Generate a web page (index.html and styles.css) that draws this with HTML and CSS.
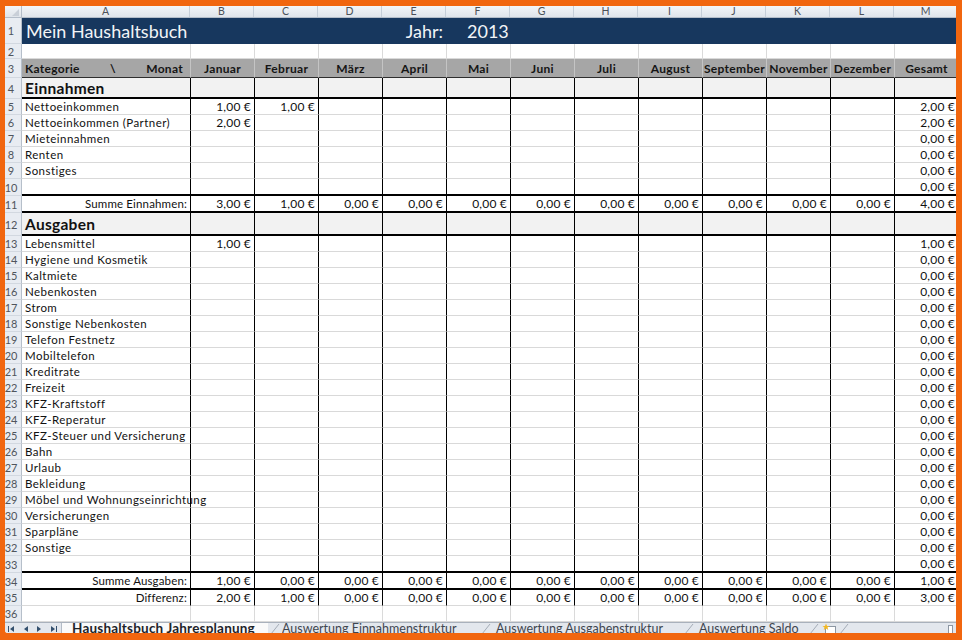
FILE: index.html
```html
<!DOCTYPE html>
<html lang="de">
<head>
<meta charset="utf-8">
<title>Mein Haushaltsbuch</title>
<link rel="stylesheet" href="styles.css">
</head>
<body>
<div class="sheet">
  <div class="cols">
    <span class="corner"><svg width="8" height="8" viewBox="0 0 8 8"><path d="M8 1 L8 8 L1 8 Z" fill="#c9cfd8"/></svg></span>
    <span>A</span><span>B</span><span>C</span><span>D</span><span>E</span><span>F</span><span>G</span><span>H</span><span>I</span><span>J</span><span>K</span><span>L</span><span>M</span>
  </div>

  <div class="row title"><span class="rh">1</span><span class="t1">Mein Haushaltsbuch</span><span class="jahr">Jahr:</span><span class="year">2013</span><span class="fill"></span></div>

  <div class="row plain r2"><span class="rh">2</span><span class="ca"></span><span></span><span></span><span></span><span></span><span></span><span></span><span></span><span></span><span></span><span></span><span></span><span></span></div>

  <div class="row hdr"><span class="rh">3</span><span class="ca kat"><em>Kategorie</em><em>\</em><em>Monat</em></span><span>Januar</span><span>Februar</span><span>März</span><span>April</span><span>Mai</span><span>Juni</span><span>Juli</span><span>August</span><span>September</span><span>November</span><span>Dezember</span><span>Gesamt</span></div>

  <div class="row sec"><span class="rh">4</span><span class="ca">Einnahmen</span><span></span><span></span><span></span><span></span><span></span><span></span><span></span><span></span><span></span><span></span><span></span><span></span></div>

  <div class="row"><span class="rh">5</span><span class="ca">Nettoeinkommen</span><span>1,00 €</span><span>1,00 €</span><span></span><span></span><span></span><span></span><span></span><span></span><span></span><span></span><span></span><span>2,00 €</span></div>
  <div class="row"><span class="rh">6</span><span class="ca">Nettoeinkommen (Partner)</span><span>2,00 €</span><span></span><span></span><span></span><span></span><span></span><span></span><span></span><span></span><span></span><span></span><span>2,00 €</span></div>
  <div class="row"><span class="rh">7</span><span class="ca">Mieteinnahmen</span><span></span><span></span><span></span><span></span><span></span><span></span><span></span><span></span><span></span><span></span><span></span><span>0,00 €</span></div>
  <div class="row"><span class="rh">8</span><span class="ca">Renten</span><span></span><span></span><span></span><span></span><span></span><span></span><span></span><span></span><span></span><span></span><span></span><span>0,00 €</span></div>
  <div class="row"><span class="rh">9</span><span class="ca">Sonstiges</span><span></span><span></span><span></span><span></span><span></span><span></span><span></span><span></span><span></span><span></span><span></span><span>0,00 €</span></div>
  <div class="row tk"><span class="rh">10</span><span class="ca"></span><span></span><span></span><span></span><span></span><span></span><span></span><span></span><span></span><span></span><span></span><span></span><span>0,00 €</span></div>

  <div class="row tk"><span class="rh">11</span><span class="ca sum">Summe Einnahmen:</span><span>3,00 €</span><span>1,00 €</span><span>0,00 €</span><span>0,00 €</span><span>0,00 €</span><span>0,00 €</span><span>0,00 €</span><span>0,00 €</span><span>0,00 €</span><span>0,00 €</span><span>0,00 €</span><span>4,00 €</span></div>

  <div class="row sec big"><span class="rh">12</span><span class="ca">Ausgaben</span><span></span><span></span><span></span><span></span><span></span><span></span><span></span><span></span><span></span><span></span><span></span><span></span></div>

  <div class="row"><span class="rh">13</span><span class="ca">Lebensmittel</span><span>1,00 €</span><span></span><span></span><span></span><span></span><span></span><span></span><span></span><span></span><span></span><span></span><span>1,00 €</span></div>
  <div class="row"><span class="rh">14</span><span class="ca">Hygiene und Kosmetik</span><span></span><span></span><span></span><span></span><span></span><span></span><span></span><span></span><span></span><span></span><span></span><span>0,00 €</span></div>
  <div class="row"><span class="rh">15</span><span class="ca">Kaltmiete</span><span></span><span></span><span></span><span></span><span></span><span></span><span></span><span></span><span></span><span></span><span></span><span>0,00 €</span></div>
  <div class="row"><span class="rh">16</span><span class="ca">Nebenkosten</span><span></span><span></span><span></span><span></span><span></span><span></span><span></span><span></span><span></span><span></span><span></span><span>0,00 €</span></div>
  <div class="row"><span class="rh">17</span><span class="ca">Strom</span><span></span><span></span><span></span><span></span><span></span><span></span><span></span><span></span><span></span><span></span><span></span><span>0,00 €</span></div>
  <div class="row"><span class="rh">18</span><span class="ca">Sonstige Nebenkosten</span><span></span><span></span><span></span><span></span><span></span><span></span><span></span><span></span><span></span><span></span><span></span><span>0,00 €</span></div>
  <div class="row"><span class="rh">19</span><span class="ca">Telefon Festnetz</span><span></span><span></span><span></span><span></span><span></span><span></span><span></span><span></span><span></span><span></span><span></span><span>0,00 €</span></div>
  <div class="row"><span class="rh">20</span><span class="ca">Mobiltelefon</span><span></span><span></span><span></span><span></span><span></span><span></span><span></span><span></span><span></span><span></span><span></span><span>0,00 €</span></div>
  <div class="row"><span class="rh">21</span><span class="ca">Kreditrate</span><span></span><span></span><span></span><span></span><span></span><span></span><span></span><span></span><span></span><span></span><span></span><span>0,00 €</span></div>
  <div class="row"><span class="rh">22</span><span class="ca">Freizeit</span><span></span><span></span><span></span><span></span><span></span><span></span><span></span><span></span><span></span><span></span><span></span><span>0,00 €</span></div>
  <div class="row"><span class="rh">23</span><span class="ca">KFZ-Kraftstoff</span><span></span><span></span><span></span><span></span><span></span><span></span><span></span><span></span><span></span><span></span><span></span><span>0,00 €</span></div>
  <div class="row"><span class="rh">24</span><span class="ca">KFZ-Reperatur</span><span></span><span></span><span></span><span></span><span></span><span></span><span></span><span></span><span></span><span></span><span></span><span>0,00 €</span></div>
  <div class="row"><span class="rh">25</span><span class="ca">KFZ-Steuer und Versicherung</span><span></span><span></span><span></span><span></span><span></span><span></span><span></span><span></span><span></span><span></span><span></span><span>0,00 €</span></div>
  <div class="row"><span class="rh">26</span><span class="ca">Bahn</span><span></span><span></span><span></span><span></span><span></span><span></span><span></span><span></span><span></span><span></span><span></span><span>0,00 €</span></div>
  <div class="row"><span class="rh">27</span><span class="ca">Urlaub</span><span></span><span></span><span></span><span></span><span></span><span></span><span></span><span></span><span></span><span></span><span></span><span>0,00 €</span></div>
  <div class="row"><span class="rh">28</span><span class="ca">Bekleidung</span><span></span><span></span><span></span><span></span><span></span><span></span><span></span><span></span><span></span><span></span><span></span><span>0,00 €</span></div>
  <div class="row"><span class="rh">29</span><span class="ca">Möbel und Wohnungseinrichtung</span><span></span><span></span><span></span><span></span><span></span><span></span><span></span><span></span><span></span><span></span><span></span><span>0,00 €</span></div>
  <div class="row"><span class="rh">30</span><span class="ca">Versicherungen</span><span></span><span></span><span></span><span></span><span></span><span></span><span></span><span></span><span></span><span></span><span></span><span>0,00 €</span></div>
  <div class="row"><span class="rh">31</span><span class="ca">Sparpläne</span><span></span><span></span><span></span><span></span><span></span><span></span><span></span><span></span><span></span><span></span><span></span><span>0,00 €</span></div>
  <div class="row"><span class="rh">32</span><span class="ca">Sonstige</span><span></span><span></span><span></span><span></span><span></span><span></span><span></span><span></span><span></span><span></span><span></span><span>0,00 €</span></div>
  <div class="row tk"><span class="rh">33</span><span class="ca"></span><span></span><span></span><span></span><span></span><span></span><span></span><span></span><span></span><span></span><span></span><span></span><span>0,00 €</span></div>

  <div class="row tk"><span class="rh">34</span><span class="ca sum">Summe Ausgaben:</span><span>1,00 €</span><span>0,00 €</span><span>0,00 €</span><span>0,00 €</span><span>0,00 €</span><span>0,00 €</span><span>0,00 €</span><span>0,00 €</span><span>0,00 €</span><span>0,00 €</span><span>0,00 €</span><span>1,00 €</span></div>
  <div class="row"><span class="rh">35</span><span class="ca sum">Differenz:</span><span>2,00 €</span><span>1,00 €</span><span>0,00 €</span><span>0,00 €</span><span>0,00 €</span><span>0,00 €</span><span>0,00 €</span><span>0,00 €</span><span>0,00 €</span><span>0,00 €</span><span>0,00 €</span><span>3,00 €</span></div>

  <div class="row plain"><span class="rh">36</span><span class="ca"></span><span></span><span></span><span></span><span></span><span></span><span></span><span></span><span></span><span></span><span></span><span></span><span></span></div>

  <div class="tabs">
    <span class="nav">
      <svg width="56" height="10" viewBox="0 0 56 10"><path d="M3.5 2 V8" stroke="#34506e" stroke-width="1"/><path d="M9 2 L5 5 L9 8 Z M23 2 L19 5 L23 8 Z M32 2 L36 5 L32 8 Z M46 2 L50 5 L46 8 Z" fill="#34506e"/><path d="M51.5 2 V8" stroke="#34506e" stroke-width="1"/></svg>
    </span>
    <span class="tab active">Haushaltsbuch Jahresplanung</span>
    <svg class="sep" width="14" height="11" viewBox="0 0 14 11"><path d="M3 11 L11 1" stroke="#a3abb6"/></svg>
    <span class="tab t2">Auswertung Einnahmenstruktur</span>
    <svg class="sep" width="14" height="11" viewBox="0 0 14 11"><path d="M3 11 L11 1" stroke="#a3abb6"/></svg>
    <span class="tab t3">Auswertung Ausgabenstruktur</span>
    <svg class="sep" width="14" height="11" viewBox="0 0 14 11"><path d="M3 11 L11 1" stroke="#a3abb6"/></svg>
    <span class="tab t4">Auswertung Saldo</span>
    <svg class="sep" width="14" height="11" viewBox="0 0 14 11"><path d="M3 11 L11 1" stroke="#a3abb6"/></svg>
    <svg class="newsheet" width="16" height="11" viewBox="0 0 16 11"><rect x="4.5" y="3.5" width="10" height="8" fill="#fff" stroke="#8d97a3"/><path d="M5 0.5 L6 3 L8.5 3 L6.5 4.6 L7.3 7 L5 5.6 L2.7 7 L3.5 4.6 L1.5 3 L4 3 Z" fill="#f2b824"/></svg>
    <svg class="sep" width="14" height="11" viewBox="0 0 14 11"><path d="M3 11 L11 1" stroke="#a3abb6"/></svg>
    <span class="handle"></span>
  </div>
</div>
</body>
</html>
```
FILE: styles.css
```css
* { box-sizing: border-box; margin: 0; padding: 0; }
html, body { height: 100%; }
body {
  background: #f1660f;
  overflow: hidden;
  font-family: Lato, "Liberation Sans", sans-serif;
  color: #111;
}
.sheet {
  margin: 6px 0 0 5px;
  width: 951px;
  height: 627px;
  overflow: hidden;
  background: #fff;
  display: flex;
  flex-direction: column;
  border-bottom-left-radius: 3px;
}

/* column letters */
.cols, .row {
  display: grid;
  grid-template-columns: 17px 168px repeat(12, 64px);
  flex: none;
}
.cols {
  height: 12px;
  background: linear-gradient(#f3f5f8, #dfe4ea);
  border-bottom: 1px solid #b4bdc9;
}
.cols span {
  border-right: 1px solid #c6ced8;
  font-size: 10.5px;
  line-height: 11px;
  text-align: center;
  color: #4b5058;
}
.cols .corner {
  display: flex;
  align-items: flex-end;
  justify-content: flex-end;
  padding: 0 2px 1px 0;
  border-right-color: #b4bdc9;
}

/* generic rows */
.row { height: 16px; }
.row > span {
  display: flex;
  align-items: center;
  justify-content: flex-end;
  padding-right: 3px;
  border-left: 1px solid #000;
  border-bottom: 1px solid #d9d9d9;
  font-size: 12px;
  letter-spacing: .2px;
  white-space: nowrap;
  overflow: hidden;
  color: #111;
}
.row > .rh {
  justify-content: center;
  padding: 0 4px 0 0;
  border-left: 0;
  border-right: 1px solid #b6bfca;
  border-bottom: 1px solid #d2d8e0;
  background: #e8ecf2;
  font-size: 11px;
  letter-spacing: 0;
  color: #50555c;
}
.row > .ca {
  border-left: 0;
  justify-content: flex-start;
  padding-left: 3px;
  font-size: 11.5px;
  letter-spacing: .45px;
  overflow: visible;
}
.row > .ca.sum {
  justify-content: flex-end;
  padding-right: 3px;
  letter-spacing: .15px;
}

/* thick bottom rule */
.row.tk { height: 17px; }
.row.tk > span:not(.rh) { border-bottom: 2px solid #000; }

/* plain (no table borders) */
.row.plain > span:not(.rh) {
  border-left-color: #dadada;
  border-bottom-color: #dadada;
}
.row.plain > .ca { border-left: 0; }
.row.r2 { height: 15px; }

/* title row */
.row.title { height: 26px; }
.row.title > span:not(.rh) {
  background: #17375e;
  border: 0;
  color: #f2f4f7;
  font-size: 18px;
  letter-spacing: 0;
}
.row.title > .t1 {
  grid-column: span 4;
  justify-content: flex-start;
  padding-left: 4px;
  letter-spacing: -.35px;
}
.row.title > .jahr { justify-content: flex-end; padding-right: 3px; }
.row.title > .year { justify-content: flex-start; padding-left: 21px; }
.row.title > .fill { grid-column: span 7; }

/* month header row */
.row.hdr { height: 19px; }
.row.hdr > span:not(.rh) {
  background: #a6a6a6;
  border-left: 1px solid #c4c4c4;
  border-bottom: 1px solid #2e2e2e;
  justify-content: center;
  padding: 0;
  font-weight: 700;
  letter-spacing: .3px;
  color: #151515;
}
.row.hdr > span.ca.kat {
  border-left: 0;
  justify-content: space-between;
  padding: 0 7px 0 3px;
  font-size: 12px;
}
.row.hdr > .ca em { font-style: normal; }

/* section rows */
.row.sec { height: 21px; }
.row.sec.big { height: 23px; }
.row.sec > span:not(.rh) {
  background: #f2f2f2;
  border-bottom: 2px solid #000;
}
.row.sec > .ca {
  font-size: 15.5px;
  font-weight: 700;
  letter-spacing: .3px;
  padding-top: 1px;
}

/* sheet tabs */
.tabs {
  flex: none;
  height: 20px;
  display: flex;
  align-items: flex-start;
  background: #e3e7ed;
  border-top: 1px solid #a9b1bc;
}
.nav {
  width: 57px;
  height: 11px;
  display: flex;
  align-items: center;
  border-right: 1px solid #b3bbc6;
}
.tab {
  flex: none;
  font-size: 12.5px;
  line-height: 12px;
  height: 11px;
  color: #3f4650;
  white-space: nowrap;
  overflow: hidden;
}
.tab.active {
  width: 206px;
  padding-left: 10px;
  background: #fafafa;
  font-size: 13.5px;
  line-height: 10px;
  font-weight: 700;
  letter-spacing: .2px;
  color: #1e2329;
}
.tab.t2 { width: 197px; }
.tab.t3 { width: 189px; padding-left: 3px; }
.tab.t4 { width: 111px; padding-left: 3px; }
.sep { flex: none; }
.newsheet { flex: none; }
.handle {
  margin-left: auto;
  margin-right: 3px;
  margin-top: 2px;
  width: 5px;
  height: 10px;
  background: #fff;
  border: 1px solid #8d97a3;
}
```
